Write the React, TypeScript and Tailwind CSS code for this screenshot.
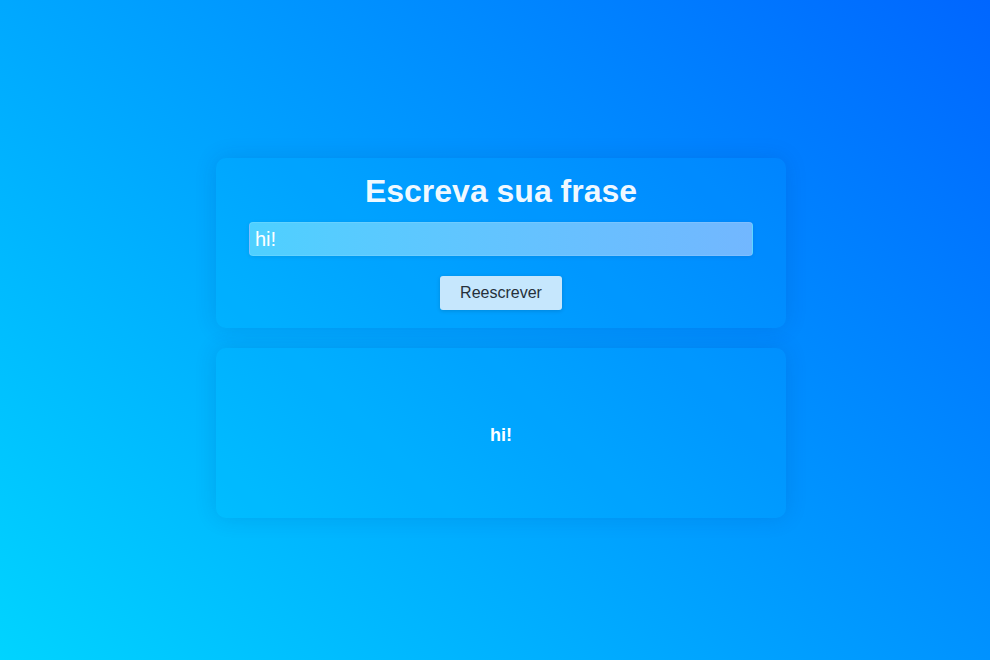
import { useState } from "react";

export default function App() {
    const [text, setText] = useState("hi!");
    const [result, setResult] = useState("hi!");

    return (
        <div className="h-screen w-full overflow-hidden bg-linear-45/srgb from-[#00d4ff] to-[#0066ff] font-['Liberation_Sans',Arial,sans-serif]">
            <div className="flex flex-col items-center gap-[20px] pt-[158px] pl-[12px]">
                <div className="w-[570px] h-[170px] rounded-[10px] bg-[#00c8ff]/[0.08] shadow-[0_0_22px_rgba(0,40,120,0.14)] px-[33px] pt-[15px] flex flex-col items-center">
                    <h1 className="text-[32px] leading-[37px] font-bold text-white/95 m-0">Escreva sua frase</h1>
                    <input
                        autoFocus
                        value={text}
                        onChange={(e) => setText(e.target.value)}
                        className="mt-[12px] w-full h-[34px] px-[5px] rounded-[4px] border border-white/10 bg-linear-to-r from-[#4ed0ff] to-[#72b7ff] text-white text-[20px] shadow-[0_1px_4px_rgba(0,0,0,0.08)] outline-none caret-white"
                    />
                    <button
                        onClick={() => setResult(text)}
                        className="mt-[20px] h-[34px] px-[20px] rounded-[3px] bg-[#c6e7fd] text-[#25303a] text-[16px] shadow-[0_1px_4px_rgba(0,0,0,0.15)]"
                    >
                        Reescrever
                    </button>
                </div>

                <div className="w-[570px] h-[170px] rounded-[10px] bg-[#00c8ff]/[0.08] shadow-[0_0_22px_rgba(0,40,120,0.14)] flex items-center justify-center">
                    <p className="pt-[4px] text-[18px] font-bold text-white">{result}</p>
                </div>
            </div>
        </div>
    );
}
